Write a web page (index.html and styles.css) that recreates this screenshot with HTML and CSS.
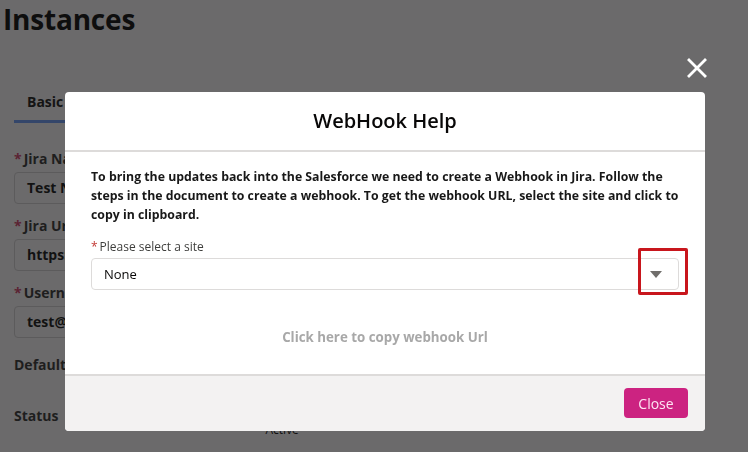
FILE: index.html
```html
<!DOCTYPE html>
<html lang="en">
<head>
<meta charset="utf-8">
<title>Instances - WebHook Help</title>
<link rel="stylesheet" href="styles.css">
</head>
<body>
<div class="page">
  <h1 class="page-title">Instances</h1>
  <div class="tabs"><span class="tab active">Basic Details</span></div>
  <div class="form">
    <div class="field">
      <label class="field-label"><span class="req">*</span>Jira Name</label>
      <div class="input">Test Name</div>
    </div>
    <div class="field">
      <label class="field-label"><span class="req">*</span>Jira Url</label>
      <div class="input">https://test.atlassian.net</div>
    </div>
    <div class="field">
      <label class="field-label"><span class="req">*</span>Username</label>
      <div class="input">test@example.com</div>
    </div>
    <div class="field plain"><span class="field-label">Default</span></div>
    <div class="status-row">
      <span class="field-label">Status</span>
      <span class="toggle-text">Active</span>
    </div>
  </div>
</div>

<button class="modal-x" aria-label="Close">
  <svg width="20" height="20" viewBox="0 0 20 20"><path d="M2 2 L18 18 M18 2 L2 18" stroke="#fff" stroke-width="2.8" stroke-linecap="square" fill="none"/></svg>
</button>

<section class="modal">
  <header class="modal-header"><h2>WebHook Help</h2></header>
  <div class="modal-body">
    <p class="intro">To bring the updates back into the Salesforce we need to create a Webhook in Jira. Follow the steps in the document to create a webhook. To get the webhook URL, select the site and click to copy in clipboard.</p>
    <div class="combo">
      <div class="combo-label"><span class="req-red">*</span>Please select a site</div>
      <div class="select">
        <span>None</span>
        <span class="caret"></span>
        <span class="highlight"></span>
      </div>
    </div>
    <div class="copy-link">Click here to copy webhook Url</div>
  </div>
  <footer class="modal-footer"><button class="btn-close">Close</button></footer>
</section>
</body>
</html>
```

FILE: styles.css
```css
* { box-sizing: border-box; }
html, body { margin: 0; padding: 0; }
body {
  width: 748px;
  height: 452px;
  overflow: hidden;
  background: #6b6a6b;
  font-family: "Open Sans", "Noto Sans", Arial, sans-serif;
  color: #111;
}
.page { padding: 0 0 0 3px; }
.page-title {
  margin: 0;
  padding-top: 1px;
  font-size: 28px;
  line-height: 36px;
  font-weight: 700;
  color: #0e0e0e;
  letter-spacing: -0.2px;
}
.tabs {
  margin-top: 53px;
  margin-left: 11px;
  width: 320px;
}
.tab {
  display: inline-block;
  padding: 0 13px 8px;
  font-size: 14px;
  line-height: 20px;
  font-weight: 700;
  color: #141414;
  border-bottom: 3px solid #34466a;
}
.form { margin: 27px 0 0 11px; width: 320px; }
.field { margin-bottom: 13px; }
.field-label {
  display: block;
  font-size: 14px;
  line-height: 18px;
  font-weight: 700;
  color: #1e1e1e;
}
.req { color: #5b2333; margin-right: 2px; }
.input {
  margin-top: 4px;
  height: 32px;
  border: 1px solid #5c5b5c;
  border-radius: 4px;
  padding: 0 12px;
  font-size: 14px;
  line-height: 30px;
  font-weight: 700;
  color: #121212;
}
.field.plain { margin-top: 18px; margin-bottom: 0; }
.status-row {
  display: flex;
  align-items: flex-start;
  margin-top: 33px;
}
.toggle-text {
  margin-left: 207px;
  margin-top: 14px;
  font-size: 12px;
  color: #111;
}

.modal-x {
  position: fixed;
  left: 687px;
  top: 58px;
  width: 20px;
  height: 20px;
  padding: 0;
  border: 0;
  background: none;
}
.modal {
  position: fixed;
  left: 65px;
  top: 92px;
  width: 640px;
  border-radius: 4px;
  overflow: hidden;
  background: #fff;
}
.modal-header {
  padding: 16px 16px;
  border-bottom: 2px solid #dddbda;
  text-align: center;
}
.modal-header h2 {
  margin: 0;
  font-size: 20px;
  line-height: 26px;
  font-weight: 600;
  color: #080707;
}
.modal-body { padding: 15px 26px 28px; }
.intro {
  margin: 0;
  font-size: 12.3px;
  line-height: 19px;
  font-weight: 700;
  color: #181818;
}
.combo { margin-top: 15px; }
.combo-label {
  font-size: 12px;
  line-height: 16px;
  color: #3e3e3c;
}
.req-red { color: #c23934; margin-right: 2px; }
.select {
  position: relative;
  margin-top: 3px;
  height: 32px;
  border: 1px solid #dddbda;
  border-radius: 4px;
  padding: 0 12px;
  display: flex;
  align-items: center;
  justify-content: space-between;
  font-size: 13px;
  color: #080707;
}
.caret {
  width: 0;
  height: 0;
  border-left: 6px solid transparent;
  border-right: 6px solid transparent;
  border-top: 7px solid #706e6b;
  margin-right: 4px;
}
.highlight {
  position: absolute;
  left: 546px;
  top: -11px;
  width: 50px;
  height: 47px;
  border: 3px solid #c8161d;
  border-radius: 2px;
}
.copy-link {
  margin-top: 38px;
  text-align: center;
  font-size: 13.3px;
  line-height: 18px;
  font-weight: 700;
  color: #a8a8a8;
}
.modal-footer {
  border-top: 2px solid #dddbda;
  background: #f3f2f2;
  padding: 12px 17px 13px;
  display: flex;
  justify-content: flex-end;
}
.btn-close {
  width: 64px;
  height: 30px;
  border: 0;
  border-radius: 4px;
  background: #cc2381;
  color: #fde6f3;
  font-family: inherit;
  font-size: 14px;
  padding: 0;
}
```
